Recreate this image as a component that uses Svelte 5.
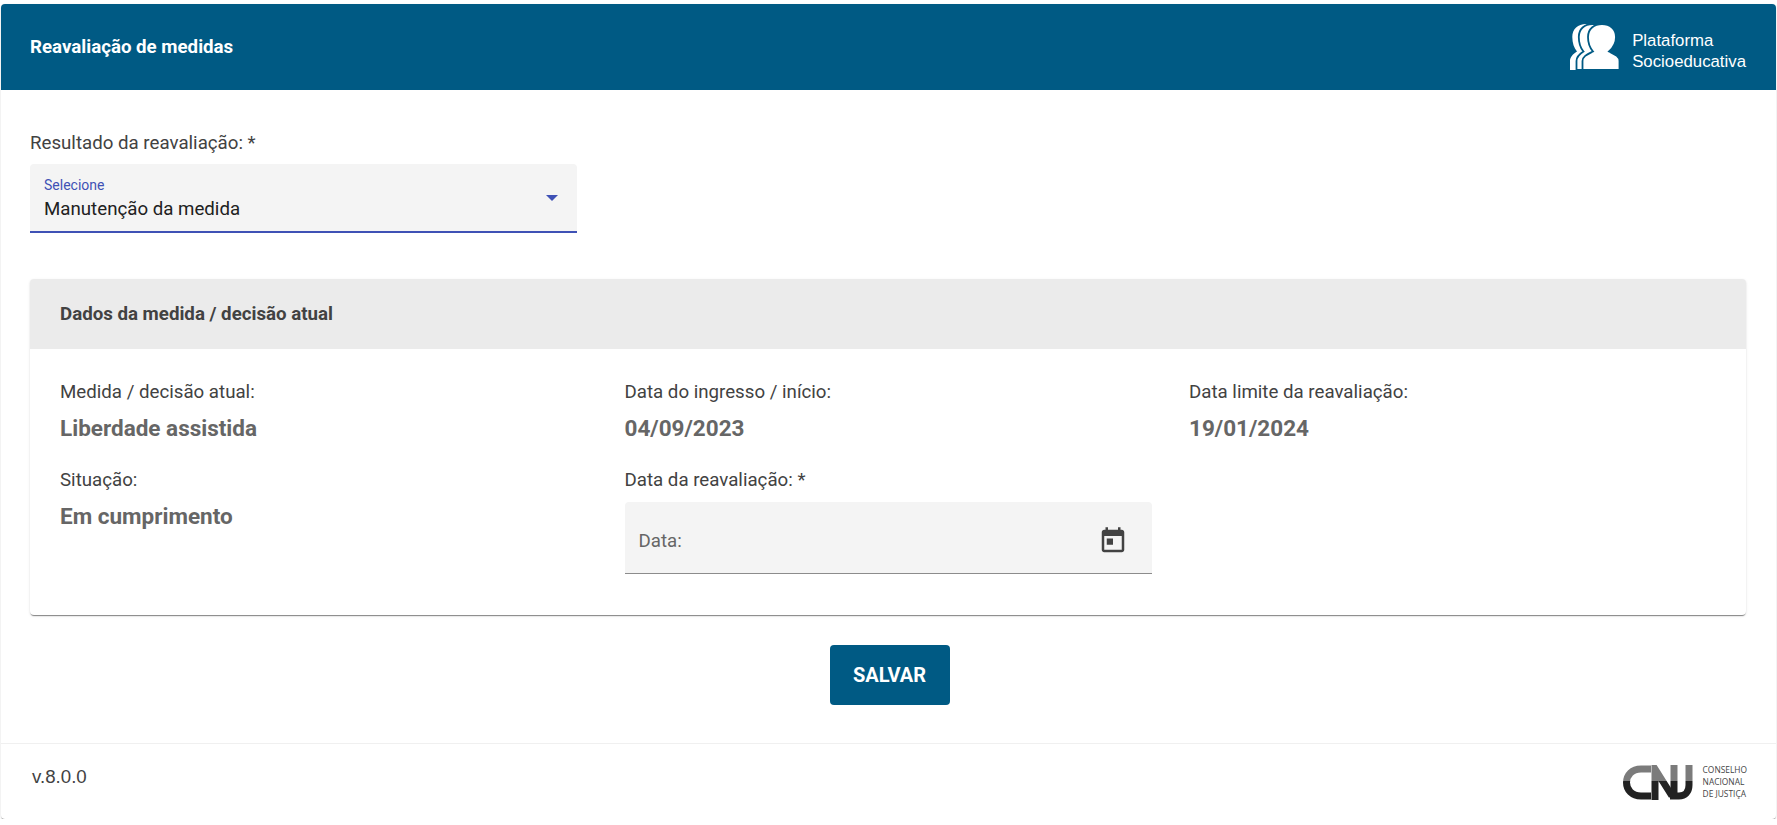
<script>
  const rows = [
    { label: 'Medida / decisão atual:', value: 'Liberdade assistida' },
    { label: 'Data do ingresso / início:', value: '04/09/2023' },
    { label: 'Data limite da reavaliação:', value: '19/01/2024' }
  ];

  // the two heads behind only show their left edge
  const backHead = 'M0 46V37C0 33 3 30 7 27.500C4 24 2.300 19 2.300 13C2.300 5 8 0 16 0C24 0 30 5 30 13C30 19 27 24 23 27.500C27 30 32 32 32 37V46Z';
  const frontHead = 'M12.500 46V37C12.500 32 18 30 23 27.500C20 24 18 19 18 13C18 5 24 0 32 0C40 0 46 5 46 13C46 19 43 24 39 27.500C44 30 49.500 32 49.500 37V46Z';
</script>

<div class="panel">
  <header class="topbar">
    <h1>Reavaliação de medidas</h1>
    <div class="brand">
      <svg width="50" height="46" viewBox="0 0 50 46" aria-hidden="true">
        <g fill="#fff" stroke="#005a84" stroke-width="1.800">
          <path stroke="none" d={backHead} />
          <path d={backHead} transform="translate(6.500 0)" />
          <path d={frontHead} />
        </g>
      </svg>
      <div class="brand-name">Plataforma<br />Socioeducativa</div>
    </div>
  </header>

  <main class="content">
    <div class="field-label">Resultado da reavaliação: *</div>
    <div class="select">
      <div class="select-text">
        <span class="select-float">Selecione</span>
        <span class="select-value">Manutenção da medida</span>
      </div>
      <span class="arrow"></span>
    </div>

    <section class="card">
      <div class="card-head">Dados da medida / decisão atual</div>
      <div class="card-body">
        {#each rows as r}
          <div>
            <div class="item-label">{r.label}</div>
            <div class="item-value">{r.value}</div>
          </div>
        {/each}
        <div>
          <div class="item-label">Situação:</div>
          <div class="item-value">Em cumprimento</div>
        </div>
        <div>
          <div class="item-label">Data da reavaliação: *</div>
          <div class="date">
            <span>Data:</span>
            <svg width="30" height="30" viewBox="0 0 24 24" aria-hidden="true">
              <path fill="#424242" d="M19 3h-1V1h-2v2H8V1H6v2H5c-1.100 0-2 .9-2 2v14c0 1.100.9 2 2 2h14c1.100 0 2-.9 2-2V5c0-1.100-.9-2-2-2zm0 16H5V8h14v11zM7 10h5v5H7z" />
            </svg>
          </div>
        </div>
      </div>
    </section>

    <div class="actions">
      <button type="button">SALVAR</button>
    </div>
  </main>

  <footer class="foot">
    <span class="version">v.8.0.0</span>
    <div class="cnj">
      <svg width="72" height="35" viewBox="0 0 72 35" aria-hidden="true">
        <defs>
          <linearGradient id="cnjg" gradientUnits="userSpaceOnUse" x1="0" y1="0" x2="0" y2="35">
            <stop offset="0.47" stop-color="#7b7b7b" />
            <stop offset="0.47" stop-color="#222" />
          </linearGradient>
        </defs>
        <g fill="none" stroke="url(#cnjg)" stroke-width="7">
          <path d="M28 4H18C9 4 3.500 10 3.500 17.500S9 31 18 31H28" />
          <path d="M32 35V4L49 31" />
          <path d="M51 33V0" />
          <path d="M66 0V20C66 27 62 31 56 31H47" />
        </g>
      </svg>
      <div class="cnj-text">CONSELHO<br />NACIONAL<br />DE JUSTIÇA</div>
    </div>
  </footer>
</div>

<style>
  :global(body) {
    background: #fff;
    font-family: Roboto, "Liberation Sans", sans-serif;
  }
  .panel {
    box-sizing: border-box;
    margin: 4px 1px 0 1px;
    height: 815px;
    display: flex;
    flex-direction: column;
    background: #fff;
    border-radius: 4px;
    box-shadow: 0 2px 1px -1px rgba(0, 0, 0, 0.35), 0 1px 1px rgba(0, 0, 0, 0.14), 0 1px 3px rgba(0, 0, 0, 0.1);
  }
  .topbar {
    height: 86px;
    flex: none;
    background: #005a84;
    border-radius: 4px 4px 0 0;
    display: flex;
    align-items: center;
    justify-content: space-between;
    padding: 0 29px;
    color: #fff;
  }
  h1 {
    margin: 0;
    font-size: 18.700px;
    font-weight: 700;
  }
  .brand {
    display: flex;
    align-items: center;
    gap: 12px;
    margin-right: 1px;
  }
  .brand svg {
    display: block;
  }
  .brand-name {
    font-family: "Liberation Sans", Arial, sans-serif;
    font-size: 16.800px;
    line-height: 21px;
    padding-top: 7px;
  }
  .content {
    flex: 1;
    padding: 41px 29px 0 29px;
    color: #424242;
  }
  .field-label {
    font-size: 18.700px;
    line-height: 24px;
    height: 33px;
    color: #424242;
  }
  .select {
    box-sizing: border-box;
    width: 547px;
    height: 69px;
    background: #f4f4f4;
    border-radius: 4px 4px 0 0;
    border-bottom: 2px solid #3f51b5;
    display: flex;
    align-items: center;
    justify-content: space-between;
    padding: 4px 19px 0 14px;
  }
  .select-text {
    display: flex;
    flex-direction: column;
  }
  .select-float {
    font-size: 14px;
    line-height: 16px;
    color: #3f51b5;
  }
  .select-value {
    font-size: 18.700px;
    line-height: 26px;
    color: #212121;
    margin-top: 3px;
  }
  .arrow {
    width: 0;
    height: 0;
    margin-bottom: 4px;
    border-left: 6px solid transparent;
    border-right: 6px solid transparent;
    border-top: 6px solid #3f51b5;
  }
  .card {
    margin-top: 46px;
    margin-right: 1px;
    height: 336px;
    border-radius: 4px;
    background: #fff;
    box-shadow: 0 2px 1px -1px rgba(0, 0, 0, 0.35), 0 1px 1px rgba(0, 0, 0, 0.14), 0 1px 3px rgba(0, 0, 0, 0.1);
    overflow: hidden;
  }
  .card-head {
    height: 70px;
    background: #ebebeb;
    padding: 0 30px;
    display: flex;
    align-items: center;
    font-size: 18.700px;
    font-weight: 700;
    color: #424242;
  }
  .card-body {
    display: grid;
    grid-template-columns: repeat(3, 1fr);
    column-gap: 37.500px;
    grid-template-rows: 88px auto;
    padding: 31px 30px 0 30px;
  }
  .item-label {
    font-size: 18.700px;
    line-height: 24px;
    color: #424242;
  }
  .item-value {
    margin-top: 10px;
    font-size: 22.500px;
    line-height: 28px;
    font-weight: 700;
    color: #666;
  }
  .date {
    box-sizing: border-box;
    margin-top: 10px;
    height: 72px;
    background: #f4f4f4;
    border-radius: 4px 4px 0 0;
    border-bottom: 1px solid #8c8c8c;
    display: flex;
    align-items: center;
    justify-content: space-between;
    padding: 6px 24px 0 14px;
    font-size: 18.700px;
    color: #666;
  }
  .actions {
    display: flex;
    justify-content: center;
    margin-top: 30px;
    padding-left: 2px;
  }
  button {
    width: 120px;
    height: 60px;
    background: #005a84;
    color: #fff;
    border: none;
    border-radius: 4px;
    font-family: inherit;
    font-size: 20px;
    font-weight: 700;
  }
  .foot {
    flex: none;
    box-sizing: border-box;
    height: 76px;
    border-top: 1px solid #f0f0f0;
    display: flex;
    align-items: center;
    justify-content: space-between;
    padding: 0 29px 0 31px;
  }
  .version {
    font-family: "Liberation Sans", Arial, sans-serif;
    font-size: 18.700px;
    color: #424242;
    margin-bottom: 9px;
  }
  .cnj {
    display: flex;
    align-items: center;
    gap: 8px;
    margin-top: 1px;
  }
  .cnj svg {
    display: block;
  }
  .cnj-text {
    font-family: "Open Sans", sans-serif;
    font-size: 8.400px;
    line-height: 12px;
    color: #444;
  }
</style>
